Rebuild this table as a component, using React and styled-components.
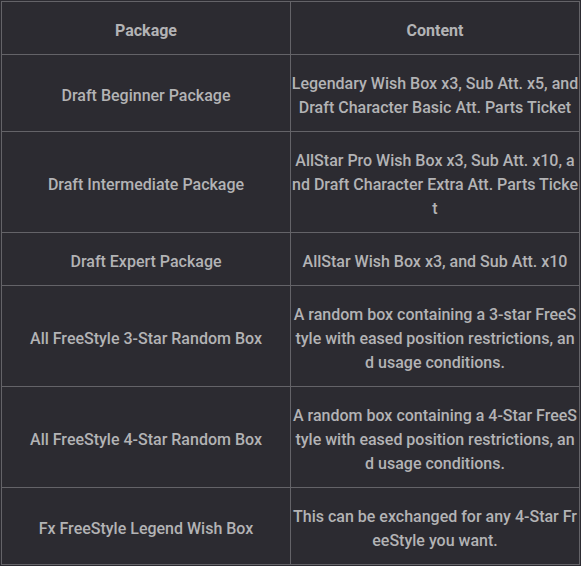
import React from "react";
import styled, { createGlobalStyle } from "styled-components";

const GlobalStyle = createGlobalStyle`
  html, body {
    margin: 0;
    background: #2c2b31;
  }
`;

const Wrap = styled.div`
  padding: 1px;
  background: #2c2b31;
`;

const Table = styled.table`
  width: 579px;
  border-collapse: collapse;
  table-layout: fixed;
  font-family: Roboto, "Liberation Sans", sans-serif;
  font-size: 16px;
  line-height: 24px;
  color: #b3b3b5;
`;

const Head = styled.th`
  border: 1px solid #646368;
  padding: 17px 0.5px 11px;
  font-weight: 700;
  text-align: center;
`;

const Cell = styled.td`
  border: 1px solid #646368;
  padding: 17px 0.5px 11px;
  font-weight: 500;
  text-align: center;
  word-break: break-all;
`;

const rows = [
  ["Draft Beginner Package", "Legendary Wish Box x3, Sub Att. x5, and Draft Character Basic Att. Parts Ticket"],
  ["Draft Intermediate Package", "AllStar Pro Wish Box x3, Sub Att. x10, and Draft Character Extra Att. Parts Ticket"],
  ["Draft Expert Package", "AllStar Wish Box x3, and Sub Att. x10"],
  ["All FreeStyle 3-Star Random Box", "A random box containing a 3-star FreeStyle with eased position restrictions, and usage conditions."],
  ["All FreeStyle 4-Star Random Box", "A random box containing a 4-Star FreeStyle with eased position restrictions, and usage conditions."],
  ["Fx FreeStyle Legend Wish Box", "This can be exchanged for any 4-Star FreeStyle you want."],
];

export default function App() {
  return (
    <Wrap>
      <GlobalStyle />
      <Table>
        <thead>
          <tr>
            <Head>Package</Head>
            <Head>Content</Head>
          </tr>
        </thead>
        <tbody>
          {rows.map(([pkg, content]) => (
            <tr key={pkg}>
              <Cell>{pkg}</Cell>
              <Cell>{content}</Cell>
            </tr>
          ))}
        </tbody>
      </Table>
    </Wrap>
  );
}
